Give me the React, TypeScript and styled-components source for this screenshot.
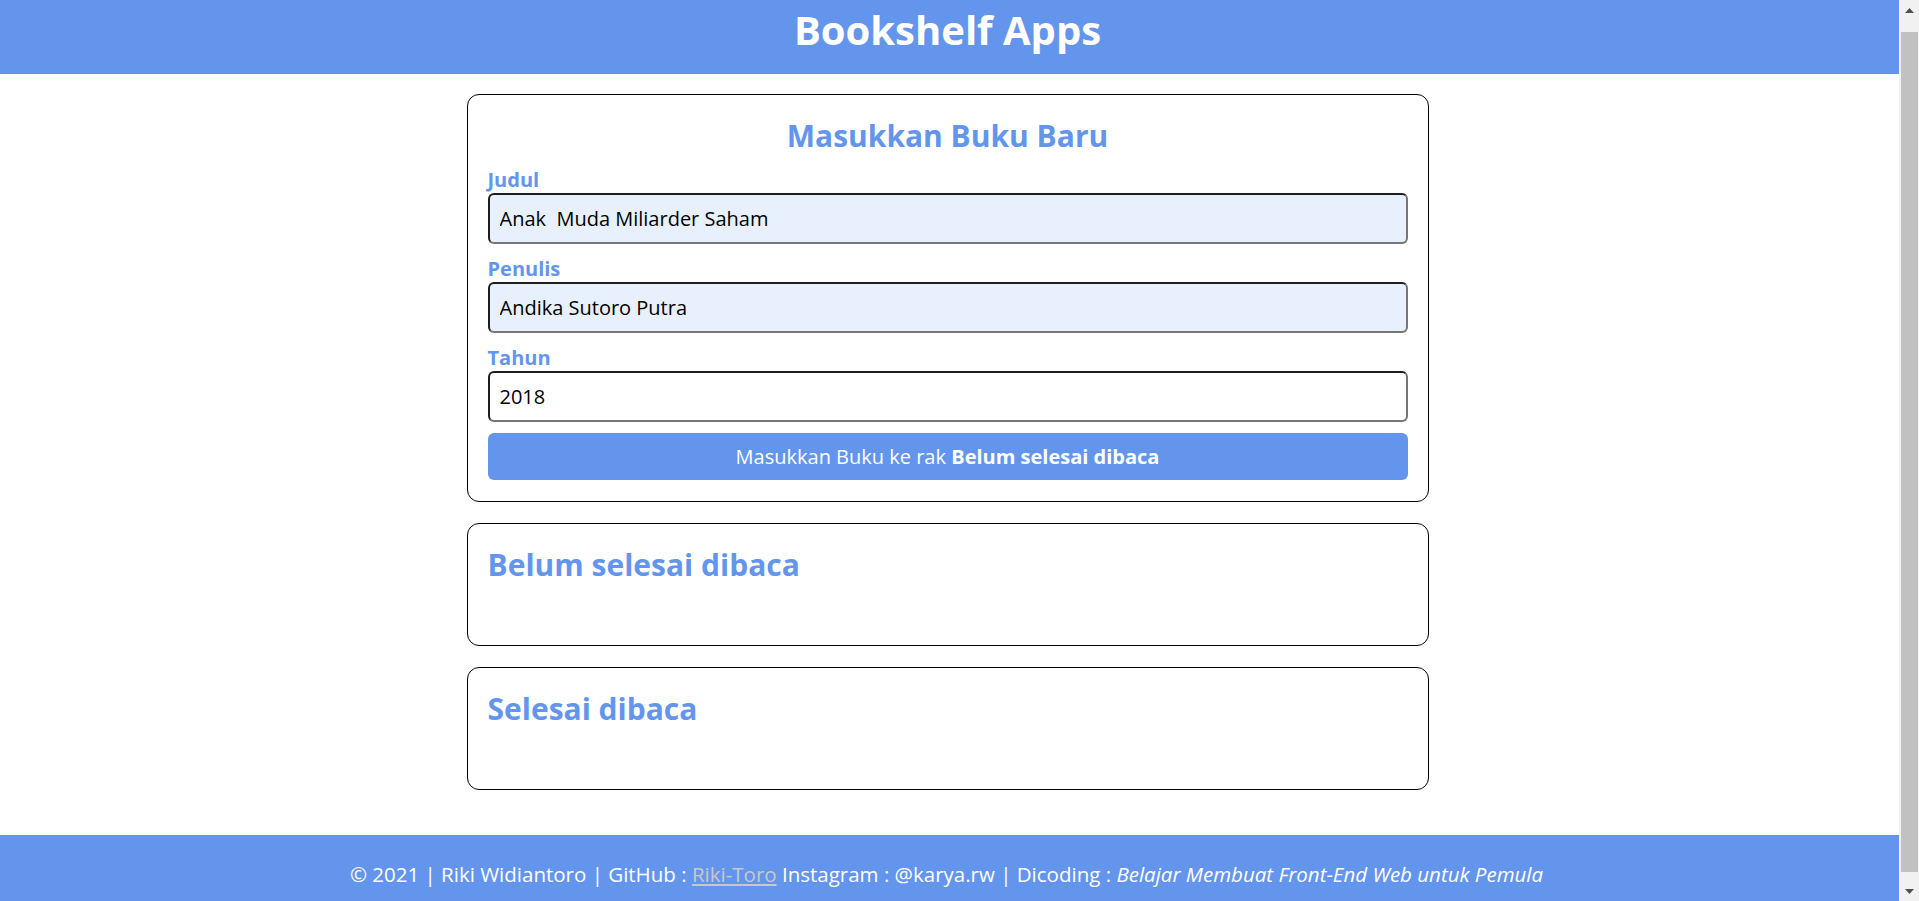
import React from "react";
import styled, { createGlobalStyle } from "styled-components";

const GlobalStyle = createGlobalStyle`
  * {
    margin: 0;
    padding: 0;
    box-sizing: border-box;
    font-family: "Open Sans", "Noto Sans", sans-serif;
  }
  html, body {
    background: #ffffff;
    color: #000000;
    font-size: 20px;
  }
`;

const Page = styled.div`
  margin-right: 20px;
`;

const HeadBar = styled.header`
  display: flex;
  align-items: center;
  justify-content: center;
  padding: 3px 10px 17px;
  background-color: #6495ed;
  color: #ffffff;
`;

const HeadTitle = styled.h1`
  font-size: 40px;
  font-weight: 700;
  line-height: 54px;
  transform: translateX(-2px);
`;

const Main = styled.main`
  max-width: 1002px;
  width: 80%;
  margin: 0 auto;
  padding: 20px;
  transform: translateX(-2px);
`;

const Card = styled.section<{ $spaced?: boolean }>`
  display: flex;
  flex-direction: column;
  padding: 20px;
  border: 1px solid #000000;
  border-radius: 12px;
  margin-top: ${(p) => (p.$spaced ? "21px" : "0")};
`;

const FormTitle = styled.h2`
  text-align: center;
  color: #6495ed;
  font-size: 30px;
  font-weight: 700;
  line-height: 41px;
`;

const ShelfTitle = styled.h2`
  color: #6495ed;
  font-size: 30px;
  font-weight: 700;
  line-height: 41px;
`;

const BookList = styled.div`
  min-height: 40px;
`;

const Form = styled.form`
  display: block;
  padding-bottom: 1px;
`;

const Field = styled.div`
  display: block;
  margin: 10px 0 11px;
`;

const Label = styled.label`
  display: block;
  color: #6495ed;
  font-weight: 700;
  font-size: 20px;
  line-height: 27px;
`;

const Input = styled.input<{ $filled?: boolean }>`
  display: block;
  width: 100%;
  padding: 10px;
  font-size: 20px;
  line-height: 27px;
  color: #000000;
  background-color: ${(p) => (p.$filled ? "#e8f0fe" : "#ffffff")};
  border-width: 2px;
  border-style: solid;
  border-color: #1e1e1e #767676 #767676 #1e1e1e;
  border-radius: 6px;
  outline: none;
  -moz-appearance: textfield;
  &::-webkit-outer-spin-button,
  &::-webkit-inner-spin-button {
    -webkit-appearance: none;
    margin: 0;
  }
`;

const SubmitButton = styled.button`
  display: block;
  width: 100%;
  padding: 10px;
  border: 0;
  border-radius: 6px;
  background-color: #6495ed;
  color: #ffffff;
  font-size: 20px;
  line-height: 27px;
  cursor: pointer;
`;

const Strong = styled.span`
  font-weight: 700;
`;

const Footer = styled.footer`
  margin-top: 25px;
  padding: 26px 0 36px;
  background-color: #6495ed;
  color: #ffffff;
  text-align: center;
  font-size: 20.5px;
  line-height: 27px;
`;

const FooterText = styled.p`
  transform: translateX(-3px);
`;

const FooterLink = styled.a`
  color: #c8c8c8;
  text-decoration: underline;
`;

const Italic = styled.i`
  font-style: italic;
`;

/* decorative browser scrollbar drawn over the right edge */
const ScrollbarDeco = styled.div`
  position: fixed;
  top: 0;
  right: 0;
  width: 20px;
  height: 100vh;
  display: flex;
  flex-direction: column;
  background: #f1f1f1;
`;

const ScrollArrow = styled.div`
  height: 20px;
  flex: none;
  display: flex;
  align-items: center;
  justify-content: center;
  padding-left: 1px;
`;

const ScrollTrack = styled.div`
  flex: 1;
  display: flex;
  padding: 12px 1px 9px 2px;
`;

const ScrollThumb = styled.div`
  flex: 1;
  background: #c1c1c1;
`;

function Arrow({ dir }: { dir: "up" | "down" }) {
  return (
    <svg width="9" height="5" viewBox="0 0 9 5">
      {dir === "up" ? (
        <polygon points="4.5,0 9,5 0,5" fill="#505050" />
      ) : (
        <polygon points="0,0 9,0 4.5,5" fill="#505050" />
      )}
    </svg>
  );
}

export default function App() {
  return (
    <>
      <GlobalStyle />
      <Page>
        <HeadBar>
          <HeadTitle>Bookshelf Apps</HeadTitle>
        </HeadBar>
        <Main>
          <Card>
            <FormTitle>Masukkan Buku Baru</FormTitle>
            <Form onSubmit={(e) => e.preventDefault()}>
              <Field>
                <Label htmlFor="inputBookTitle">Judul</Label>
                <Input
                  id="inputBookTitle"
                  type="text"
                  $filled
                  defaultValue="Anak  Muda Miliarder Saham"
                />
              </Field>
              <Field>
                <Label htmlFor="inputBookAuthor">Penulis</Label>
                <Input
                  id="inputBookAuthor"
                  type="text"
                  $filled
                  defaultValue="Andika Sutoro Putra"
                />
              </Field>
              <Field>
                <Label htmlFor="inputBookYear">Tahun</Label>
                <Input id="inputBookYear" type="number" defaultValue="2018" />
              </Field>
              <SubmitButton type="submit">
                Masukkan Buku ke rak <Strong>Belum selesai dibaca</Strong>
              </SubmitButton>
            </Form>
          </Card>
          <Card $spaced>
            <ShelfTitle>Belum selesai dibaca</ShelfTitle>
            <BookList />
          </Card>
          <Card $spaced>
            <ShelfTitle>Selesai dibaca</ShelfTitle>
            <BookList />
          </Card>
        </Main>
        <Footer>
          <FooterText>
            © 2021 | Riki Widiantoro | GitHub :{" "}
            <FooterLink href="#">Riki-Toro</FooterLink> Instagram : @karya.rw |
            Dicoding : <Italic>Belajar Membuat Front-End Web untuk Pemula</Italic>
          </FooterText>
        </Footer>
      </Page>
      <ScrollbarDeco aria-hidden="true">
        <ScrollArrow>
          <Arrow dir="up" />
        </ScrollArrow>
        <ScrollTrack>
          <ScrollThumb />
        </ScrollTrack>
        <ScrollArrow>
          <Arrow dir="down" />
        </ScrollArrow>
      </ScrollbarDeco>
    </>
  );
}
